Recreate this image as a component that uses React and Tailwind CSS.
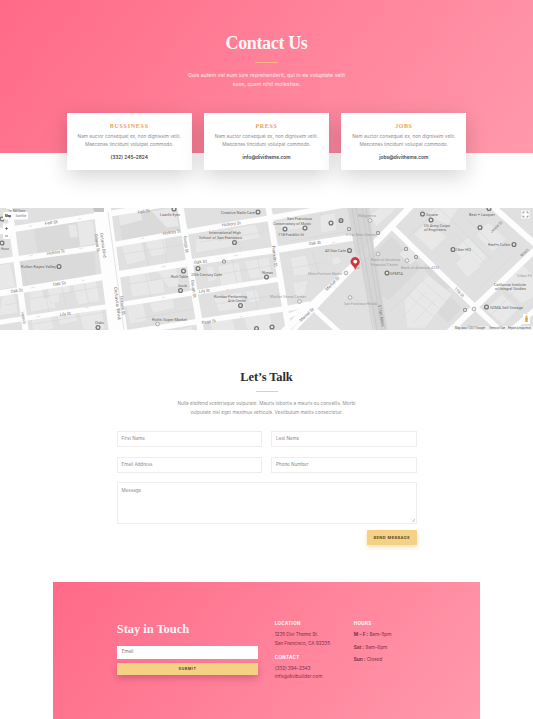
const serif = "font-['Liberation_Serif',serif] font-bold";

const cards = [
  { title: 'BUSSINESS', contact: '(332) 245–2824', tracking: 'tracking-[0.75px]' },
  { title: 'PRESS', contact: 'info@divitheme.com', tracking: 'tracking-[0.7px]' },
  { title: 'JOBS', contact: 'jobs@divitheme.com', tracking: 'tracking-[0.5px]' },
];

// Streets: path, width
const streets = [
  ['M-5 232L145 208L160 205', 6],
  ['M-5 262L95 248L180 233L270 218L350 204', 5.5],
  ['M-5 294L90 279L200 261L275 250L356 237', 6.5],
  ['M-5 323L60 313L105 307L180 295L280 279', 5],
  ['M100 337L195 322L290 308L310 304', 5.5],
  ['M9 205L26 333', 6],
  ['M98 205L114 333', 10],
  ['M106 205L123 333', 9],
  ['M180 205L201 333', 6.5],
  ['M268 205L288 325', 6],
  ['M280 335L353 266L375 243L412 205', 6.5],
  ['M289 335L355 266', 4],
  ['M284 318L305 309L322 298', 5],
  ['M313 308L340 333', 5],
  ['M391 226L475 307L503 333', 5.5],
  ['M491 205L535 244', 6],
  ['M536 249L475 307L448 333', 6],
  ['M536 309L508 333', 5],
];

// Lighter building footprints
const buildings = [
  'M68 225l8-1l2 13l-8 1z', 'M77 222l16-2l3 24l-16 3z', 'M-2 265l12-2l6 24l-17 3z',
  'M28 291l14-2l2 9l10-2l2 12l-25 4z', 'M47 288l22-4l2 8l-12 3l1 7l-9 2z', 'M72 284l24-4l4 21l-22 4z',
  'M2 296l13-2l3 19l-19 3z', 'M31 318l20-3l3 14l-21 3z', 'M56 314l18-3l4 10l-18 4z', 'M79 313l23-4l3 20l-22 1z',
  'M121 246l21-4l4 18l-19 5z', 'M145 242l20-4l2 16l-16 3z', 'M128 274l19-3l4 10l12-3l2 15l-33 4z',
  'M156 270l20-3l4 19l-11 2z', 'M126 306l17-3l4 18l-17 3z', 'M149 303l24-4l2 9l-22 5z',
  'M118 215l22-4l3 9l-23 6z', 'M151 211l24-4l4 19l-12 2z', 'M195 239l22-4l1 6l15-3l3 8l-40 7z',
  'M232 228l24-4l4 14l-23 4z', 'M218 266l21-4l4 22l-22 4z', 'M244 261l25-4l3 19l-22 3z',
  'M206 267l7-1l4 14l-9 2z', 'M213 297l28-5l5 16l-27 4z', 'M245 291l12-2l3 12l-11 2z',
  'M279 222l26-5l1 11l-23 3z', 'M320 215l15-2l2 17l-16 3z', 'M290 258l16-3l5 19l-17 2z',
  'M331 259l7-3l4 6l-8 4z', 'M293 283l15-3l-3 14l-9 5z', 'M427 274l25 20l-27 34h-18l-3-27z',
  'M414 234l14-13l19 16l-15 14z', 'M454 250l14-13l19 20l-15 16z', 'M455 263l13-10l13 13l-13 12z',
  'M476 235l12-13l18 17l-13 13z', 'M485 309l17-15l16 15l-15 16z', 'M502 284l21-19l12 12v19l-13 8z',
  'M425 215l10-7h24l-11 17z', 'M399 254l10-8l11 11l-10 8z', 'M370 215l9-7h18l-21 19z',
  'M180 329l12-3l2 6h-15z', 'M210 322l22-4l4 13h-24z', 'M244 317l26-4l3 17h-26z',
];

const darker = [
  'M34 229L91 219L94 245L38 256z', 'M19 261L94 252L96 275L21 287z', 'M372 255L391 236L462 308L448 323L430 306L452 285L427 262L389 300L380 295z',
  'M118 213L177 207L181 230L122 240z',
];

// Parcel boundary lines
const parcels = [
  'M30 299l70-12', 'M33 324l72-12', 'M124 254l57-9', 'M129 284l56-9', 'M135 319l60-10', 'M5 305l22-4', 'M5 212l26 85', 'M62 287l5 23',
  'M84 282l5 22', 'M45 290l4 22', 'M143 240l6 28', 'M162 238l5 25', 'M145 272l6 26', 'M200 242l64-10', 'M208 276l68-11', 'M215 304l68-10',
  'M232 259l6 30', 'M257 257l5 24', 'M253 286l5 25', 'M236 229l5 24', 'M290 241l60-10', 'M292 268l34-6', 'M312 250l7 24', 'M388 313l47-44',
  'M414 287l34 29', 'M421 280l34 29', 'M407 294l32 27', 'M408 237l36-33', 'M440 209l52 51', 'M454 232l32 32', 'M467 219l31 31', 'M490 316l31-31',
  'M501 289l23 21', 'M344 308l9-11l16 15', 'M426 292l-22 24', 'M435 300l-22 24', 'M478 289l34-32',
];

// x, y, text, width, rotation
const labels = [
  [45, 225, 'Fell St', 13, -9], [138, 213.8, 'Fell St', 12, -9], [47, 255, 'Hickory St', 18, -9], [163, 235, 'Hickory St', 18, -9], [222, 226.5, 'Hickory St', 19, -7],
  [11, 293, 'Oak St', 12, -8], [53, 286, 'Oak St', 13, -8], [194, 264, 'Oak St', 13, -7], [309, 245, 'Oak St', 12, -7],
  [60, 316, 'Lily St', 11, -8], [199, 293, 'Lily St', 11, -8], [202, 324, 'Page St', 14, -8],
  [94.5, 234, 'Octavia St', 18, 82], [100, 233, 'Octavia Blvd', 25, 82], [114, 287, 'Octavia Blvd', 33, 83], [120, 296, 'Octavia St', 19, 83],
  [183.5, 236, 'Gough St', 17, 83], [191, 280, 'Gough St', 18, 83], [272, 246, 'Franklin St', 21, 83], [21.5, 312, 'Laguna St', 12, 83],
  [327, 291, 'Market St', 18, -45], [301, 322, 'Market St', 18, -43], [378, 305, 'S Van Ness', 22, 80],
  [454, 289, '11th St', 12, 46], [492, 233, 'Jessie St', 15, -44], [522, 257, 'Minna St', 10, -44],
];

// x, y, text, width, faded
const places = [
  [7, 211.8, 'The Mill Store', 18], [21, 268.3, 'Kulton Kayes Valley', 35], [160, 215.5, "Loard's Eyes", 20], [1, 250, 'House', 8],
  [221, 213.5, 'Creative Nails Care', 34], [209, 234.4, 'International High', 32], [199, 239, 'School of San Francisco', 43],
  [287, 220, 'San Francisco', 25], [273, 224.6, 'Conservatory of Music', 38], [278, 236, '118 Franklin St', 26], [325, 252.3, 'All Star Cafe', 21],
  [191, 275.5, '20th Century Cafe', 31], [171, 278, 'Rich Table', 17], [178, 287, 'Souvla', 9], [262, 273.5, 'Nimax', 11],
  [214, 297.6, 'Kumbar Performing', 33], [228, 302.2, 'Arts Center', 18], [152, 320.5, "Rich's Super Market", 35], [95, 323.5, 'Otaku', 9],
  [270, 298, 'Market Street Center', 36, 1], [308, 274.5, 'Metro Furniture Market', 34, 1], [344, 304.5, 'San Francisco Honda', 33, 1],
  [358, 217.2, 'Walgreens', 18, 1], [346, 235.5, 'S Van Ness Station', 30, 1], [371, 261.2, 'Bank of America', 29, 1], [371, 265.8, 'Financial Center', 27, 1],
  [401, 269, 'Bank of America ATM', 38, 1], [390, 275, 'SFMTA', 13], [426, 216.3, 'Square', 12], [424, 226.6, 'US Army Corps', 26], [424, 231.2, 'of Engineers', 22],
  [469, 215.5, 'Best + Lacquer', 26], [456, 251.3, 'Uber HQ', 15], [488, 246.3, 'Reef+s Coffee', 22], [494, 285.6, 'California Institute', 32], [495, 290.2, 'of Integral Studies', 31],
  [517, 277, 'Urban Fit', 15, 1], [490, 308.8, 'SOMA Self Storage', 33],
];

const pins = [
  [2, 219], [2, 243], [59, 266.5], [98, 327.5], [174, 209], [258, 212], [234.5, 242.5], [285, 229], [305, 228], [331, 223], [341, 220.5], [349.5, 250.5],
  [183.5, 271], [198, 268.5], [180.5, 290.5], [266.5, 277], [240.5, 305.5], [256.5, 328.5], [272, 327], [422.5, 214], [431, 220], [480, 227.5],
  [514, 244.5], [453, 249.5], [387, 273], [486.5, 307], [489, 208.5],
];
const fadedPins = [[157.5, 324], [299.5, 301.5], [350, 297.5], [346, 273], [370, 220.5], [378, 254], [407, 260.5], [474, 309]];
const transit = [[406, 249], [416, 257], [465, 310], [224, 261.5], [378, 233], [349, 229]];

function CityMap() {
  return (
    <svg viewBox="0 208 533 122" className="block h-[122px] w-[533px] font-['Roboto',sans-serif]" preserveAspectRatio="none">
      <rect x="0" y="208" width="533" height="122" fill="#e0e0e0" />
      {darker.map((d) => <path key={d} d={d} fill="#dadada" />)}
      {buildings.map((d) => <path key={d} d={d} fill="#e8e8e8" stroke="#d8d8d8" strokeWidth="0.4" />)}
      {parcels.map((d) => <path key={d} d={d} fill="none" stroke="#d2d2d2" strokeWidth="0.45" />)}
      {streets.map(([d, w]) => <path key={d} d={d} fill="none" stroke="#fdfdfd" strokeWidth={w} strokeLinejoin="round" />)}
      <path d="M347 205L355 252L361 262L375 333H388L374 246L369 205z" fill="#d4d4d4" fillOpacity="0.9" />
      <path d="M352 208L373 330M356 208L377 330M362 208L382 330M366 208L371 240L385 330" fill="none" stroke="#bcbcbc" strokeWidth="0.4" />
      <path d="M93 208H104V212H94z" fill="#c4c4c4" />
      <path d="M108 212L124 330M29 226h3M78 219h3M29 256l4-1M79 249l4-1M31 288l4-1M82 281l3-1M141 239l3-1M162 267l4-1M36 317l4-1M85 308l4-1M162 298l3-1M234 256l4-1M226 290l3-1M240 317l3-1M320 215l3-1M332 243l3-1" stroke="#c8c8c8" strokeWidth="0.5" fill="none" />
      {labels.map(([x, y, text, w, r]) => (
        <text key={`${x}-${y}`} x={x} y={y} fontSize="4.2" fill="#777" textLength={w} lengthAdjust="spacingAndGlyphs" transform={`rotate(${r} ${x} ${y})`}>{text}</text>
      ))}
      {places.map(([x, y, text, w, faded]) => (
        <text key={`${x}-${y}`} x={x} y={y} fontSize="3.9" fill={faded ? '#a0a0a0' : '#666'} textLength={w} lengthAdjust="spacingAndGlyphs">{text}</text>
      ))}
      {pins.map(([x, y]) => <circle key={`${x}-${y}`} cx={x} cy={y} r="1.9" fill="#e8e8e8" stroke="#747474" strokeWidth="1.3" />)}
      {fadedPins.map(([x, y]) => <circle key={`${x}-${y}`} cx={x} cy={y} r="1.9" fill="#eee" stroke="#a0a0a0" strokeWidth="0.8" />)}
      {transit.map(([x, y]) => <rect key={`${x}-${y}`} x={x - 1.5} y={y - 1.5} width="3" height="3" rx="0.5" fill="#ddd" stroke="#888" strokeWidth="0.8" />)}
      <path d="M339.8 221.800L342.300 219.200" stroke="#666" strokeWidth="0.8" />
      <rect x="3" y="212" width="25" height="7.500" fill="#fff" />
      <text x="5" y="216.800" fontSize="3.6" fontWeight="700" fill="#111" textLength="6" lengthAdjust="spacingAndGlyphs">Map</text>
      <text x="15.5" y="216.800" fontSize="3.6" fill="#777" textLength="11" lengthAdjust="spacingAndGlyphs">Satellite</text>
      <rect x="3" y="223.5" width="7" height="15.5" fill="#fff" />
      <path d="M5 228.5h3M6.5 227v3M5 236h3" stroke="#555" strokeWidth="0.7" />
      <rect x="521.5" y="210.5" width="8" height="8" fill="#fff" />
      <path d="M523 213.5V212h1.5M526.5 212H528v1.5M528 215.5V217h-1.5M524.5 217H523v-1.5" fill="none" stroke="#666" strokeWidth="0.7" />
      <rect x="523" y="314" width="7" height="10" fill="#fff" />
      <circle cx="526.5" cy="316.5" r="1" fill="#e6a63c" />
      <path d="M525 317.5h3l-.4 4.5h-2.2z" fill="#e6a63c" />
      <rect x="453" y="326" width="80" height="4" fill="#f3f3f3" fillOpacity="0.8" />
      <text x="455" y="329" fontSize="3" fill="#555" textLength="30" lengthAdjust="spacingAndGlyphs">Map data ©2017 Google</text>
      <text x="489" y="329" fontSize="3" fill="#555" textLength="16" lengthAdjust="spacingAndGlyphs">Terms of Use</text>
      <text x="508" y="329" fontSize="3" fill="#555" textLength="23" lengthAdjust="spacingAndGlyphs">Report a map error</text>
      <ellipse cx="357.500" cy="268" rx="3" ry="1" fill="#999" fillOpacity="0.4" />
      <path d="M355.200 269.500C354.500 266 350.800 265 350.800 261.700A4.400 4.400 0 0 1 359.600 261.700C359.600 265 356 266 355.200 269.500z" fill="#d6343b" stroke="#b92730" strokeWidth="0.4" />
      <circle cx="355.200" cy="261.600" r="1.900" fill="#fff" />
    </svg>
  );
}

function Field({ children }) {
  return <div className="flex h-4 items-center border border-[#eeeeee] bg-white px-1 text-[4.6px] text-[#8a8a8a]">{children}</div>;
}

export default function App() {
  return (
    <div className="h-[719px] w-[533px] overflow-hidden bg-white font-['Inter',sans-serif] whitespace-nowrap">
      <header className="flex h-[152.500px] flex-col items-center bg-linear-[128deg] from-[#ff6a88] to-[#ff99ac] text-center text-white">
        <h1 className={`${serif} mt-8 text-[18px] leading-[22px] tracking-[-0.350px] text-white/95`}>Contact Us</h1>
        <div className="mt-[8px] h-px w-[23px] bg-[#f8b878]" />
        <p className="mt-[8px] text-[5.200px] leading-[8.700px] tracking-[0.060px] text-white/80">
          Quis autem vel eum iure reprehenderit, qui in ea voluptate velit<br />esse, quam nihil molestiae.
        </p>
      </header>

      <section className="-mt-[39.500px] flex justify-center gap-3">
        {cards.map((c) => (
          <article key={c.title} className="h-[56.700px] w-[125.300px] bg-white pt-[8.500px] text-center shadow-[0_6px_22px_rgba(0,0,0,0.18)]">
            <h2 className={`${serif} ${c.tracking} text-[6px] leading-[8px] text-[#e9a15b]`}>{c.title}</h2>
            <p className="mt-[2px] text-[4.750px] leading-[8.500px] text-[#8d8d8d]">
              Nam auctor consequat ex, non dignissim velit.<br />Maecenas tincidunt volutpat commodo.
            </p>
            <p className="mt-[4px] text-[4.800px] font-semibold leading-[8px] text-[#444]">{c.contact}</p>
          </article>
        ))}
      </section>

      <section className="mt-[38.300px]"><CityMap /></section>

      <section className="flex flex-col items-center text-center">
        <h2 className={`${serif} mt-[39px] text-[12.500px] leading-4 tracking-[-0.100px] text-[#2d2d2d]`}>Let’s Talk</h2>
        <div className="mt-[6px] h-px w-[22px] bg-[#f2d184]" />
        <p className="mt-[7.500px] text-[4.700px] leading-[8.500px] text-[#8f8f8f]">
          Nulla eleifend scelerisque vulputate. Mauris lobortis a mauris eu convallis. Morbi<br />vulputate nisl eget maximus vehicula. Vestibulum mattis consectetur.
        </p>
      </section>

      <form className="mx-auto mt-[15px] flex w-[300px] flex-col">
        <div className="grid grid-cols-2 gap-x-[9px] gap-y-[9.500px]">
          <Field>First Name</Field>
          <Field>Last Name</Field>
          <Field>Email Address</Field>
          <Field>Phone Number</Field>
        </div>
        <div className="mt-[9.500px] flex h-[42px] items-end justify-between border border-[#eeeeee] px-1 text-[4.600px] text-[#8a8a8a]">
          <span className="self-start pt-[4px] leading-[8px]">Message</span>
          <svg viewBox="0 0 4 4" className="-mr-[3px] mb-px size-[3px]"><path d="M0 4L4 0M2 4L4 2" stroke="#999" strokeWidth="0.7" /></svg>
        </div>
        <button type="button" className="mt-[5.500px] h-[15px] w-[49.500px] self-end rounded-[1px] bg-[#f4d184] text-[3.900px] font-bold tracking-[0.500px] text-[#58461f] shadow-[0_2px_4px_rgba(244,209,132,0.7)]">SEND MESSAGE</button>
      </form>

      <footer className="mx-auto mt-[37.500px] flex h-[137px] w-[426.500px] bg-linear-[128deg] from-[#ff6a88] to-[#ff99ac] pl-[63.500px] text-[4.800px]">
        <div className="w-[141.500px] pt-[38px]">
          <h2 className={`${serif} text-[12.500px] leading-[18px] tracking-[-0.050px] text-white/95`}>Stay in Touch</h2>
          <div className="mt-[7.500px] flex h-[13px] items-center bg-white px-[5px] text-[4.600px] text-[#777]">Email</div>
          <button type="button" className="mt-[4px] block h-[12px] w-full bg-[#f4d184] text-[3.700px] font-bold tracking-[0.600px] text-[#58461f] shadow-[0_3px_7px_rgba(120,20,50,0.3)]">SUBMIT</button>
        </div>
        <div className="ml-[16.500px] w-[79px] pt-[37.500px] leading-[8.600px] text-[#803448]">
          <h3 className="text-[4.500px] font-bold tracking-[0.350px] text-white">LOCATION</h3>
          <p className="mt-[1.500px] tracking-[-0.100px]">1235 Divi Theme St.<br />San Francisco, CA 92335</p>
          <h3 className="mt-[6.500px] text-[4.500px] font-bold tracking-[0.350px] text-white">CONTACT</h3>
          <p className="mt-[1.500px] tracking-[-0.100px]">(332) 394–2343<br /><span className="tracking-normal">info@divibuilder.com</span></p>
        </div>
        <div className="pt-[37.500px] leading-[8.600px] text-[#803448]">
          <h3 className="text-[4.500px] font-bold tracking-[0.350px] text-white">HOURS</h3>
          <div className="mt-[1.500px] flex flex-col gap-[4.100px] tracking-[-0.050px]">
            <p><b>M – F :</b> 8am–5pm</p>
            <p><b>Sat :</b> 9am–6pm</p>
            <p><b>Sun :</b> Closed</p>
          </div>
        </div>
      </footer>
    </div>
  );
}
